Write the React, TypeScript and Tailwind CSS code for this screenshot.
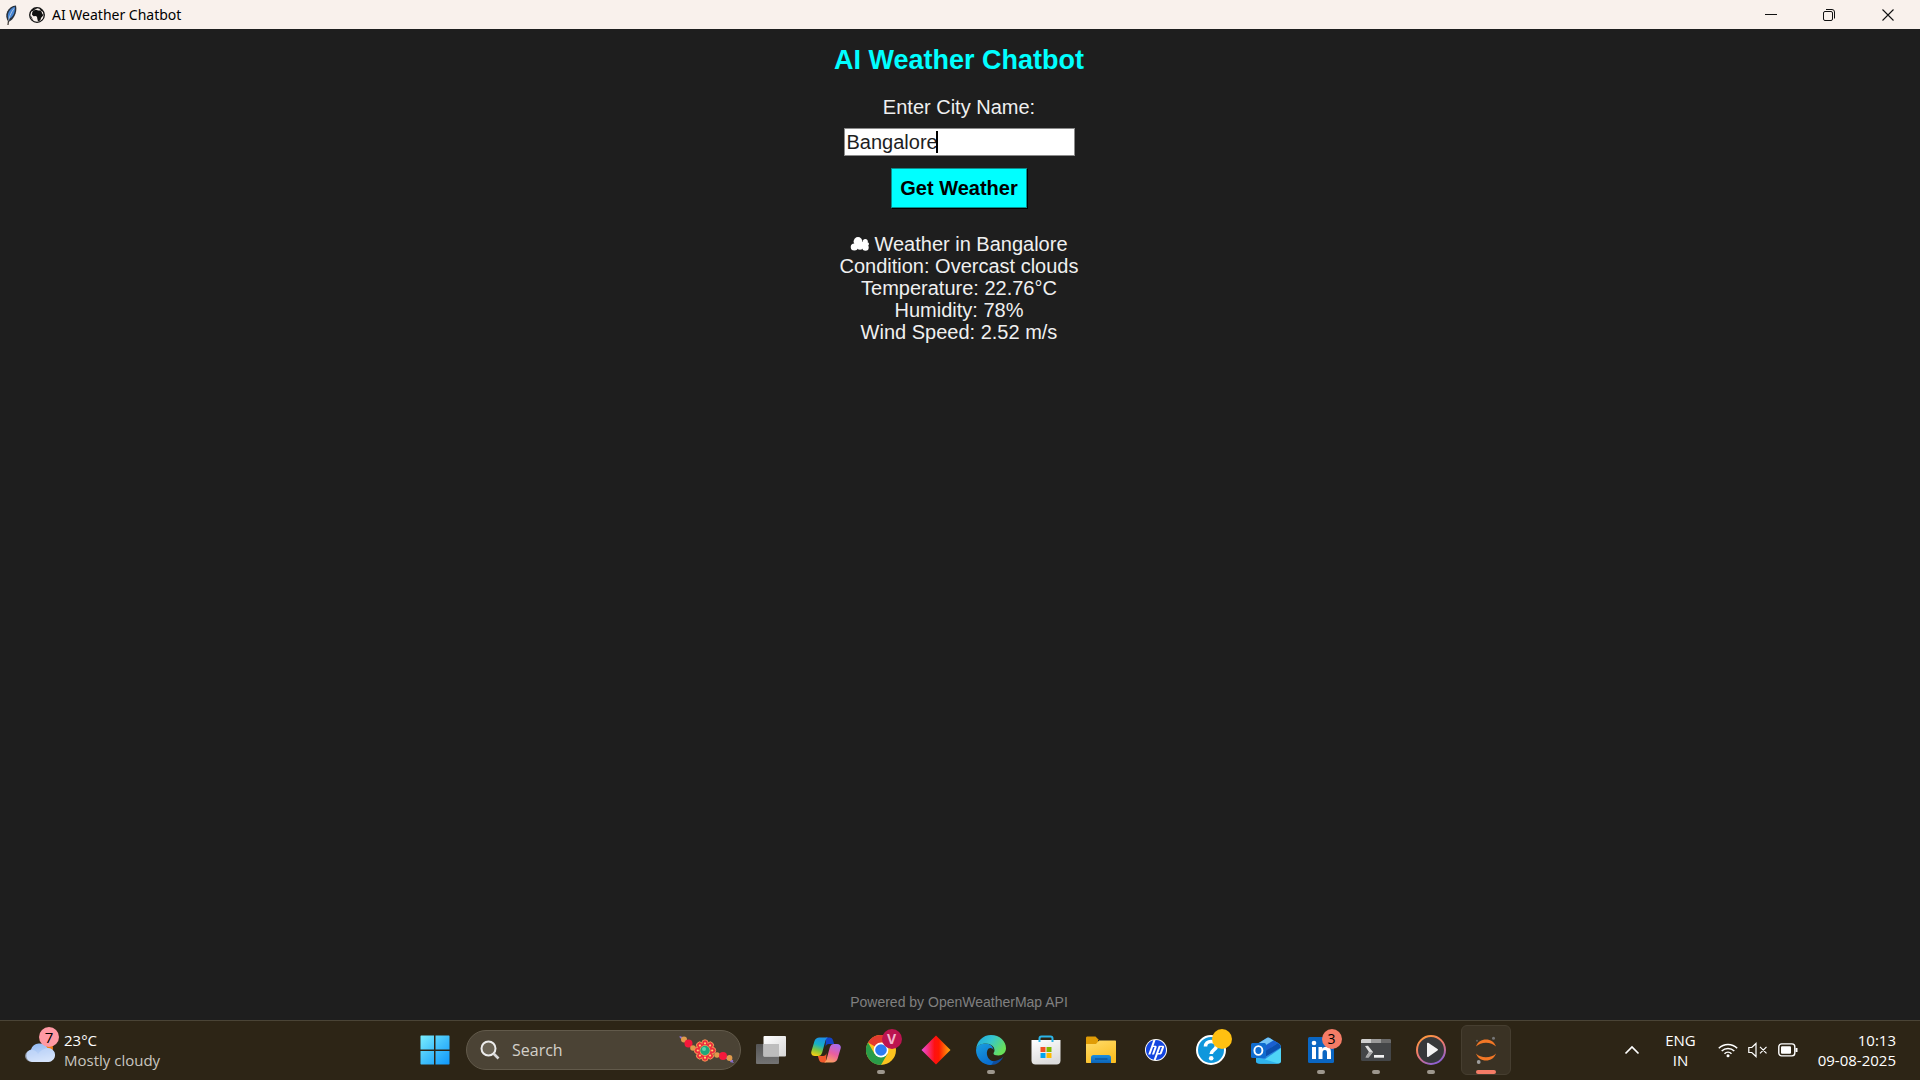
import { useState, type ReactNode } from "react";
import { SiHp } from "react-icons/si";

function FeatherIcon() {
  return (
    <svg width="14" height="20" viewBox="0 0 14 20" aria-hidden="true">
      <path d="M4.500 17C2 13.500 1.500 10 3.200 6.500 5 3 8 .8 12 .5c.8 3.500.3 7-1.500 10.500-1.300 2.500-3 4.500-6 6z" fill="#27303c" />
      <path d="M4.500 14C3 11 4 7.500 6 5c1.200-1.600 3-2.800 4.800-3.300.4 3.300-.2 6-1.500 8.300-1.100 2-2.600 3.200-4.800 4z" fill="#4585d4" />
      <path d="M4.200 18C4.800 13 6.500 8 10 3.500" stroke="#b9cbe2" strokeWidth="0.900" fill="none" />
      <path d="M4 20l.5-4.500" stroke="#3a332c" strokeWidth="1.200" />
    </svg>
  );
}

function GlobeIcon() {
  return (
    <svg width="16" height="16" viewBox="0 0 16 16" aria-hidden="true">
      <circle cx="8" cy="8" r="7.300" fill="#f9f1ec" stroke="#111" strokeWidth="1.300" />
      <path d="M4.500 3.500L7 2.800l2.200.6 2.500.2 1.300 2.200.4 1.400 1.400.2-1.500 2-1.300 1.500-.3 1.600-1.600 1.800-1.200-.3-.6-2.200-.3-2-1.400-.8-2 .2L3 7.800l.2-2.400z" fill="#111" />
      <path d="M1.500 4.500L4 1.800l3-.8 1 .6-2 .8-2.500 1.800zM10 1.500l2.500 1 1.800 2.300-1.800-.6z" fill="#111" />
      <path d="M1 8.500l1.500 1.300 1 2.200.5 2z" fill="#111" />
    </svg>
  );
}

function CloudGlyph() {
  return (
    <svg width="20" height="16" viewBox="0 0 20 16" aria-hidden="true" fill="#fff">
      <circle cx="4.300" cy="11" r="3.600" />
      <circle cx="8" cy="5.500" r="4.400" />
      <circle cx="10" cy="10.500" r="3.300" />
      <circle cx="15.300" cy="5.500" r="2.500" />
      <circle cx="17.300" cy="8" r="1.700" />
      <circle cx="15.500" cy="11.500" r="3.200" />
      <path d="M5 6h11v6H5z" />
    </svg>
  );
}

function WeatherIcon() {
  return (
    <svg width="30" height="22" viewBox="0 0 30 22" aria-hidden="true">
      <defs>
        <linearGradient id="wc" x1="0" y1="0" x2="0.300" y2="1">
          <stop offset="0" stopColor="#8db8f4" />
          <stop offset="0.600" stopColor="#b8d0f7" />
          <stop offset="1" stopColor="#e3edfd" />
        </linearGradient>
      </defs>
      <circle cx="22" cy="7" r="6" fill="#f27a1a" />
      <path d="M7 21a7 6.500 0 0 1-1-12.500A9 8.500 0 0 1 22.500 7 7 7 0 0 1 23.500 21z" fill="url(#wc)" />
      <path d="M7 21a7 6 0 0 1 0-12c3 0 5 2 6 4 2-3 5-5 9-6a7 7 0 0 1 1.500 14z" fill="#c9dcfa" opacity="0.600" />
    </svg>
  );
}

function StartIcon() {
  return (
    <svg width="30" height="30" viewBox="0 0 30 30" aria-hidden="true">
      <defs>
        <linearGradient id="win" gradientUnits="userSpaceOnUse" x1="0" y1="0" x2="30" y2="30">
          <stop offset="0" stopColor="#7cf0ff" />
          <stop offset="0.500" stopColor="#41c0fb" />
          <stop offset="1" stopColor="#0d96fb" />
        </linearGradient>
      </defs>
      <path d="M1 .5h13v14H.5V1zM15.500.5h13.500l.5.500v13.500h-14zM.5 16H14v13.500H1L.5 29zM15.500 16h14v13l-.5.500H15.500z" fill="url(#win)" />
    </svg>
  );
}

function SearchIcon() {
  return (
    <svg width="20" height="20" viewBox="0 0 20 20" fill="none" aria-hidden="true">
      <circle cx="8.500" cy="8.500" r="7" stroke="#ececec" strokeWidth="2" fill="#6a6355" />
      <path d="M13.500 13.500l5 5" stroke="#d8d8d8" strokeWidth="2.600" />
    </svg>
  );
}

function RakhiIcon() {
  const petals = [0, 45, 90, 135, 180, 225, 270, 315];
  return (
    <svg width="56" height="30" viewBox="0 0 56 30" aria-hidden="true">
      <path d="M1 2L15 14M38 19l16 7" stroke="#8a6fd0" strokeWidth="1.500" />
      <path d="M0 1l4 1-1 2zM55 28l-4-1 1-3z" fill="#8a6fd0" />
      <circle cx="5" cy="4.500" r="3" fill="#e09a4c" />
      <circle cx="9.500" cy="8.500" r="4" fill="#f5183c" />
      <circle cx="14" cy="13" r="2.800" fill="#e09a4c" />
      <circle cx="38" cy="20" r="2.800" fill="#e09a4c" />
      <circle cx="44" cy="21" r="4" fill="#f5183c" />
      <circle cx="50.500" cy="23" r="2.900" fill="#e09a4c" />
      {petals.map((a) => (
        <circle
          key={a}
          cx="26"
          cy="8"
          r="3.200"
          fill="#ee2b3e"
          stroke="#f3a057"
          strokeWidth="0.900"
          transform={`rotate(${a} 26 15.500)`}
        />
      ))}
      <circle cx="26" cy="15.500" r="7.500" fill="#ee2b3e" />
      {petals.map((a) => (
        <circle key={a} cx="26" cy="8.300" r="1.100" fill="#ffd36b" transform={`rotate(${a} 26 15.500)`} />
      ))}
      <circle cx="26" cy="15.500" r="5.400" fill="#f0a55c" />
      <circle cx="26" cy="15.500" r="4.700" fill="#1fa67a" />
      <circle cx="25" cy="14" r="2" fill="#5fd3ad" />
    </svg>
  );
}

function TaskViewIcon() {
  return (
    <svg width="30" height="28" viewBox="0 0 30 28" aria-hidden="true">
      <defs>
        <linearGradient id="tvb" x1="0" y1="0" x2="0" y2="1">
          <stop offset="0" stopColor="#555" />
          <stop offset="1" stopColor="#747474" />
        </linearGradient>
        <linearGradient id="tvf" x1="0" y1="0" x2="1" y2="1">
          <stop offset="0" stopColor="#fff" />
          <stop offset="1" stopColor="#d6d6d6" />
        </linearGradient>
      </defs>
      <rect x="0" y="8" width="23" height="20" rx="1" fill="url(#tvb)" />
      <rect x="7.500" y="0" width="22.500" height="20.500" rx="1" fill="url(#tvf)" />
      <rect x="7.500" y="8" width="15.500" height="12.500" fill="#bdbdbd" />
    </svg>
  );
}

function CopilotIcon() {
  return (
    <svg width="30" height="26" viewBox="0 0 30 26" aria-hidden="true">
      <defs>
        <linearGradient id="cpa" x1="0.600" y1="0" x2="0.300" y2="1">
          <stop offset="0" stopColor="#1c8fe8" />
          <stop offset="0.400" stopColor="#17b1c4" />
          <stop offset="0.700" stopColor="#7fc63f" />
          <stop offset="1" stopColor="#f7cf13" />
        </linearGradient>
        <linearGradient id="cpb" x1="0.700" y1="0" x2="0.300" y2="1">
          <stop offset="0" stopColor="#a86bf0" />
          <stop offset="0.500" stopColor="#ea5da0" />
          <stop offset="1" stopColor="#fda560" />
        </linearGradient>
      </defs>
      <path d="M15 .5h3.500c2 0 3 1 3.600 3l1 3.500H18c-2 0-3 1-3.500 3z" fill="#1343c8" />
      <path d="M15 25.500h-3.500c-2 0-3-1-3.600-3l-1-3.500H12c2 0 3-1 3.500-3z" fill="#f1592c" />
      <path d="M8.500.5H17c-1.500.5-2.200 2-2.800 4l-3 11c-.8 2.500-2 3.500-4.200 3.500H4c-3 0-4.500-2-3.500-5l3-10C4.300 1.800 6 .5 8.500.5z" fill="url(#cpa)" />
      <path d="M21.500 25.500H13c1.500-.5 2.200-2 2.800-4l3-11C19.600 8 20.800 7 23 7h3c3 0 4.500 2 3.500 5l-3 10c-.8 2.200-2.500 3.500-5 3.500z" fill="url(#cpb)" />
    </svg>
  );
}

function ChromeIcon() {
  return (
    <svg width="30" height="30" viewBox="0 0 30 30" aria-hidden="true">
      <circle cx="15" cy="15" r="15" fill="#fcc31e" />
      <path d="M15 15L2 7.500A15 15 0 0 1 28 7.500H15z" fill="#e33b2e" />
      <path d="M2 7.500A15 15 0 0 0 15 30l6.500-11.250L15 15 8.500 18.750z" fill="#2a9c48" />
      <circle cx="15" cy="15" r="7.400" fill="#fff" />
      <circle cx="15" cy="15" r="5.800" fill="#2c7bf2" />
    </svg>
  );
}

function DiamondIcon() {
  return (
    <svg width="30" height="30" viewBox="0 0 30 30" aria-hidden="true">
      <defs>
        <linearGradient id="dm">
          <stop offset="0" stopColor="#ea4fe6" />
          <stop offset="0.450" stopColor="#ff1010" />
          <stop offset="0.600" stopColor="#ff1800" />
          <stop offset="1" stopColor="#ffb010" />
        </linearGradient>
      </defs>
      <path d="M15 .5L29.500 15 15 29.500.5 15z" fill="url(#dm)" />
    </svg>
  );
}

function EdgeIcon() {
  return (
    <svg width="30" height="30" viewBox="0 0 24 24" aria-hidden="true">
      <defs>
        <linearGradient id="ega" x1="0" y1="0" x2="1" y2="0.500">
          <stop offset="0" stopColor="#1ba5e0" />
          <stop offset="0.500" stopColor="#35c5cf" />
          <stop offset="1" stopColor="#68e05a" />
        </linearGradient>
        <linearGradient id="egb" x1="0" y1="0" x2="0.500" y2="1">
          <stop offset="0" stopColor="#1a9fdf" />
          <stop offset="1" stopColor="#0a6fd0" />
        </linearGradient>
      </defs>
      <path d="M12 8c-3 0-5 3-4.500 6.500C8 19 12 21.500 16 20.500c2.500-.6 4.500-1.500 6-3.500C20 21.500 16.500 24 12 24 7 24 5 17 6 13z" fill="#0f4fa0" />
      <path d="M.1 11.500C.5 8.500 4 6.800 7.500 6.800c4 0 6.500 2.700 6.500 5.200-1-2-4-2.200-5 .5-1.300 3.800 1.500 8 5 8.700-1 2-2 2.800-2 2.800C5 24 0 18.500 0 12z" fill="url(#egb)" />
      <path d="M.1 11.500C.5 5 5.500 0 12 0c7 0 12 5 12 10.500 0 3.500-2.800 5.800-6 5.800-2.800 0-4-.8-4-1.600 0-.6.800-.9.800-2.500 0-3-3-5.400-7-5.400-3.800 0-7 1.700-7.700 4.700z" fill="url(#ega)" />
    </svg>
  );
}

function StoreIcon() {
  return (
    <svg width="30" height="30" viewBox="0 0 30 30" aria-hidden="true">
      <defs>
        <linearGradient id="st" x1="0" y1="0" x2="0.400" y2="1">
          <stop offset="0" stopColor="#fff" />
          <stop offset="1" stopColor="#dcdcdc" />
        </linearGradient>
      </defs>
      <path d="M8.500 7V3.500c0-1.400.8-2 2-2h9c1.200 0 2 .6 2 2V7" stroke="#2bb5e8" strokeWidth="2" fill="none" />
      <path d="M.5 5h29v20.500c0 2.500-1.500 4-4 4h-21c-2.500 0-4-1.500-4-4z" fill="url(#st)" />
      <path d="M8.500 5v2M21.500 5v2" stroke="#2bb5e8" strokeWidth="2" />
      <path d="M9.500 12h5v5h-5z" fill="#f05022" />
      <path d="M15.500 12h5v5h-5z" fill="#7fba00" />
      <path d="M9.500 18h5v5h-5z" fill="#00a4ef" />
      <path d="M15.500 18h5v5h-5z" fill="#ffb900" />
    </svg>
  );
}

function FolderIcon() {
  return (
    <svg width="30" height="28" viewBox="0 0 30 28" aria-hidden="true">
      <defs>
        <linearGradient id="fo" x1="0" y1="0" x2="0.500" y2="1">
          <stop offset="0" stopColor="#ffdc6b" />
          <stop offset="1" stopColor="#fbbf24" />
        </linearGradient>
        <linearGradient id="fb" x1="0" y1="0" x2="0" y2="1">
          <stop offset="0" stopColor="#1b8ee0" />
          <stop offset="1" stopColor="#0c64b8" />
        </linearGradient>
      </defs>
      <path d="M0 2c0-1 .6-1.500 1.500-1.500h8L13 4h-1v8H0z" fill="#e09c06" />
      <path d="M0 8h10l3-3.500h16c.6 0 1 .4 1 1V26c0 .6-.5 1-1 1H1c-.6 0-1-.4-1-1z" fill="url(#fo)" />
      <path d="M5 27v-5.500c0-1.500 1-2.500 2.500-2.500h15c1.500 0 2.500 1 2.500 2.500V27z" fill="url(#fb)" />
      <path d="M9 23h12.500" stroke="#0a4f96" strokeWidth="1.200" />
    </svg>
  );
}

function HpIcon() {
  return (
    <span className="grid size-[22px] place-items-center rounded-full bg-white">
      <SiHp size={20} color="#1446e0" aria-hidden="true" />
    </span>
  );
}

function HelpIcon() {
  return (
    <svg width="30" height="30" viewBox="0 0 30 30" aria-hidden="true">
      <circle cx="15" cy="15" r="14" fill="#0f97dc" stroke="#fff" strokeWidth="2" />
      <path d="M9.500 11.500c0-3 2.300-5 5.500-5s5.500 1.800 5.500 4.500c0 3.800-5.300 4-5.300 8" stroke="#fff" strokeWidth="3.600" fill="none" />
      <circle cx="15.200" cy="23.300" r="2.300" fill="#fff" />
    </svg>
  );
}

function OutlookIcon() {
  return (
    <svg width="30" height="27" viewBox="0 0 30 27" aria-hidden="true">
      <path d="M5 7.500L16 .8c.8-.5 1.600-.5 2.400 0L28 6.500c1.200.8 2 2 2 3.500v14c0 1.500-1 2.500-2.500 2.500H7.500C6 26.500 5 25.500 5 24z" fill="#2a8be0" />
      <path d="M5 8L16 1c.8-.5 1.600-.5 2.400 0l4 2.400L8 12z" fill="#74c4f6" />
      <path d="M11 11l11.500-7.600L27 6 12 16z" fill="#1a5fd0" />
      <path d="M13 15L27 6l2 2 .8 2.500L14 20z" fill="#0b4fae" />
      <path d="M30 11v13c0 1.500-1 2.500-2.500 2.500H8z" fill="#4fd4f7" />
      <path d="M5 20l22.500 6.500h-20C6 26.500 5 25.500 5 24z" fill="#2fb4ee" />
      <rect x="0" y="6" width="15" height="15" rx="1.500" fill="#0f6cd0" />
      <ellipse cx="7.400" cy="13.500" rx="4" ry="4.400" fill="none" stroke="#fff" strokeWidth="1.900" />
    </svg>
  );
}

function LinkedInIcon() {
  return (
    <svg width="26" height="26" viewBox="0 0 26 26" aria-hidden="true">
      <rect width="26" height="26" rx="1.500" fill="#0a66c2" />
      <circle cx="6" cy="6" r="2.300" fill="#fff" />
      <path d="M4 10h4v12H4zM10.500 10h3.800v1.700c.7-1.200 2-2 3.900-2 3.600 0 4.800 2.200 4.800 5.600V22h-4v-6c0-1.700-.5-2.900-2.100-2.900-1.700 0-2.400 1.200-2.400 2.900v6h-4z" fill="#fff" />
    </svg>
  );
}

function TerminalIcon() {
  return (
    <svg width="30" height="22" viewBox="0 0 30 22" aria-hidden="true">
      <rect width="30" height="22" rx="1.500" fill="#444648" />
      <path d="M1 0h9v4H0V1z" fill="#cfcfcf" />
      <path d="M10 0h10v4H10z" fill="#9b9b9b" />
      <path d="M20 0h9l1 1v3H20z" fill="#6a6a6a" />
      <path d="M4 7l3-.2 5 6.200-4.500 5.500-3-.2L8 13z" fill="#dedede" />
      <path d="M4.500 18.500L8 13h4l-4.500 5.500z" fill="#a8a8a8" />
      <path d="M13 16h10v2.700H13z" fill="#f2f2f2" />
    </svg>
  );
}

function MediaIcon() {
  return (
    <svg width="30" height="30" viewBox="0 0 30 30" aria-hidden="true">
      <defs>
        <linearGradient id="md" x1="0.200" y1="0" x2="0.700" y2="1">
          <stop offset="0" stopColor="#ff9a3c" />
          <stop offset="0.450" stopColor="#f07a6a" />
          <stop offset="1" stopColor="#8a5fd8" />
        </linearGradient>
      </defs>
      <circle cx="15" cy="15" r="14" fill="#36383a" stroke="url(#md)" strokeWidth="2" />
      <path d="M11 8.500c0-.7.600-1 1.200-.7L21.500 14c.6.400.6 1 0 1.400L12.200 22c-.6.300-1.200 0-1.200-.7z" fill="#f3f3f3" />
    </svg>
  );
}

function JupyterIcon() {
  return (
    <svg width="22" height="28" viewBox="0 0 22 28" aria-hidden="true">
      <path d="M1 10.500C2.500 6 6.500 3.500 11 3.500s8.500 2.500 10 7c-2.500-2.500-6-3.800-10-3.800S3.500 8 1 10.500z" fill="#f37726" />
      <path d="M1 17.500c1.500 4.500 5.500 7 10 7s8.500-2.500 10-7c-2.500 2.500-6 3.800-10 3.800S3.500 20 1 17.500z" fill="#f37726" />
      <circle cx="18.500" cy="2.300" r="1.500" fill="#767677" />
      <circle cx="3.700" cy="26" r="1.900" fill="#9e9e9e" />
      <circle cx="2" cy="4.800" r="1" fill="#616262" />
    </svg>
  );
}

function Badge({ className, children }: { className: string; children?: ReactNode }) {
  return (
    <span className={`absolute grid size-5 place-items-center rounded-full text-sm leading-none ${className}`}>
      {children}
    </span>
  );
}

type Task = { name: string; icon: ReactNode; badge?: ReactNode; running?: boolean; active?: boolean };

const tasks: Task[] = [
  { name: "Task view", icon: <TaskViewIcon /> },
  { name: "Copilot", icon: <CopilotIcon /> },
  {
    name: "Chrome",
    icon: <ChromeIcon />,
    badge: <Badge className="-top-[6px] -right-[6px] bg-[#bb1450] font-bold text-[#f3b5cc]">V</Badge>,
    running: true,
  },
  { name: "Launcher", icon: <DiamondIcon /> },
  { name: "Edge", icon: <EdgeIcon />, running: true },
  { name: "Store", icon: <StoreIcon /> },
  { name: "File Explorer", icon: <FolderIcon /> },
  { name: "HP", icon: <HpIcon /> },
  { name: "Get help", icon: <HelpIcon />, badge: <Badge className="-top-[6px] -right-[6px] bg-[#ffc011]" /> },
  { name: "Outlook", icon: <OutlookIcon /> },
  {
    name: "LinkedIn",
    icon: <LinkedInIcon />,
    badge: <Badge className="-top-[8px] -right-[8px] bg-[#f57c66] text-black">3</Badge>,
    running: true,
  },
  { name: "Terminal", icon: <TerminalIcon />, running: true },
  { name: "Media Player", icon: <MediaIcon />, running: true },
  { name: "Jupyter", icon: <JupyterIcon />, active: true },
];

function TaskButton({ task }: { task: Task }) {
  return (
    <div className="flex w-[55px] justify-center">
      <button
        type="button"
        aria-label={task.name}
        className={`relative grid size-[50px] place-items-center rounded-md border ${
          task.active ? "border-[#463e30] bg-[#3a3224]" : "border-transparent"
        }`}
      >
        <span className="relative block">
          {task.icon}
          {task.badge}
        </span>
        {task.running && <span className="absolute bottom-0 left-5 h-1 w-2 rounded-full bg-[#9d978d]" />}
        {task.active && <span className="absolute bottom-0 left-3.5 h-1 w-5 rounded-full bg-[#f57c66]" />}
      </button>
    </div>
  );
}

function TitleBar() {
  return (
    <header className="flex h-[29px] shrink-0 items-center bg-[#f9f1ec] pl-1 text-black">
      <FeatherIcon />
      <h1 className="ml-[11px] flex items-center gap-[7px] text-sm">
        <GlobeIcon />
        AI Weather Chatbot
      </h1>
      <div className="ml-auto flex h-full">
        <button type="button" aria-label="Minimize" className="grid w-[58px] place-items-center">
          <svg width="12" height="12" viewBox="0 0 12 12" aria-hidden="true">
            <path d="M0 5.500h12" stroke="#111" />
          </svg>
        </button>
        <button type="button" aria-label="Restore" className="grid w-[58px] place-items-center">
          <svg width="12" height="12" viewBox="0 0 12 12" fill="none" stroke="#111" aria-hidden="true">
            <rect x="0.500" y="2.500" width="9" height="9" rx="1.500" />
            <path d="M3 .5h6A2.500 2.500 0 0 1 11.500 3v6.500" />
          </svg>
        </button>
        <button type="button" aria-label="Close" className="mr-[2px] grid w-[60px] place-items-center">
          <svg width="12" height="12" viewBox="0 0 12 12" stroke="#111" strokeWidth="1.100" aria-hidden="true">
            <path d="M.5.5l11 11M11.500.5l-11 11" />
          </svg>
        </button>
      </div>
    </header>
  );
}

function Chatbot() {
  const [city, setCity] = useState("Bangalore");
  return (
    <main className="flex grow flex-col items-center bg-[#1e1e1e] pr-[2px] font-['Liberation_Sans',Arial,sans-serif] text-xl leading-[23px] text-[#f0f0f0]">
      <h2 className="mt-[15px] text-[27px] leading-8 font-bold text-[#00ffff]">AI Weather Chatbot</h2>
      <label htmlFor="city" className="mt-5">
        Enter City Name:
      </label>
      <div className="relative mt-[9px] w-[231px]">
        <input
          id="city"
          value={city}
          onChange={(e) => setCity(e.target.value)}
          className="block h-7 w-full border border-[#8a8a8a] bg-white px-[2px] text-[#1e1e1e] outline-none"
        />
        <span className="absolute top-[3px] left-[92px] h-[22px] w-[2px] bg-black" />
      </div>
      <button
        type="button"
        className="mt-3 h-10 border border-[#0b8f8f] bg-[#00ffff] px-2 font-bold text-black shadow-[1px_1px_0_#000]"
      >
        Get Weather
      </button>
      <section className="mt-[25px] text-center leading-[22px]">
        <p className="flex items-center justify-center gap-1">
          <CloudGlyph />
          Weather in Bangalore
        </p>
        <p>Condition: Overcast clouds</p>
        <p>Temperature: 22.76°C</p>
        <p>Humidity: 78%</p>
        <p>Wind Speed: 2.52 m/s</p>
      </section>
      <footer className="mt-auto mb-[10px] text-sm leading-4 text-[#808080]">Powered by OpenWeatherMap API</footer>
    </main>
  );
}

function Tray() {
  return (
    <div className="flex items-center justify-end pr-6 text-[15px] leading-5 text-white">
      <button type="button" aria-label="Show hidden icons" className="mr-[25px]">
        <svg width="16" height="10" viewBox="0 0 16 10" fill="none" stroke="#fff" strokeWidth="1.700" aria-hidden="true">
          <path d="M1.500 8.500L8 2l6.500 6.500" />
        </svg>
      </button>
      <div className="mr-[22px] text-center">
        <p>ENG</p>
        <p>IN</p>
      </div>
      <div className="mr-5 flex items-center gap-[10px]">
        <svg width="20" height="16" viewBox="0 0 20 16" fill="none" stroke="#fff" strokeWidth="1.500" aria-hidden="true">
          <path d="M.8 6.300a13 13 0 0 1 18.400 0M3.700 9a9 9 0 0 1 12.600 0M6.500 11.700a5 5 0 0 1 7 0" />
          <circle cx="10" cy="13.700" r="1.500" fill="#fff" stroke="none" />
        </svg>
        <svg width="20" height="16" viewBox="0 0 20 16" fill="none" stroke="#fff" strokeWidth="1.200" aria-hidden="true">
          <path d="M.8 5.500h3L8 1.500v13l-4.200-4h-3zM12 4.800l6.500 6.500M18.500 4.800L12 11.300" />
        </svg>
        <svg width="20" height="14" viewBox="0 0 20 14" fill="none" stroke="#fff" strokeWidth="1.400" aria-hidden="true">
          <rect x="0.800" y="0.900" width="16" height="12" rx="2.800" />
          <rect x="3" y="3.200" width="10" height="7.500" rx="1" fill="#fff" stroke="none" />
          <path d="M18.500 5v4" strokeWidth="2" />
        </svg>
      </div>
      <div className="text-right">
        <p>10:13</p>
        <p>09-08-2025</p>
      </div>
    </div>
  );
}

function Taskbar() {
  return (
    <nav className="grid h-[60px] shrink-0 grid-cols-[1fr_auto_1fr] border-t border-[#4a4436] bg-[#2d2516] pb-px font-['Open_Sans','Noto_Sans',sans-serif]">
      <div className="flex items-center pl-[25px] text-[15px] leading-5">
        <div className="relative mt-1 mr-[9px]">
          <WeatherIcon />
          <span className="absolute -top-[14px] left-[14px] grid size-5 place-items-center rounded-full bg-[#ff99a4] leading-none text-black">
            7
          </span>
        </div>
        <div>
          <p className="text-white">23°C</p>
          <p className="text-[#c9c6c0]">Mostly cloudy</p>
        </div>
      </div>
      <div className="flex items-center">
        <button type="button" aria-label="Start" className="grid w-[55px] place-items-center">
          <StartIcon />
        </button>
        <label className="mr-[2px] ml-1 flex h-10 w-[275px] items-center rounded-full border border-[#625a4b] bg-[#4b4335] pr-[5px] pl-[13px]">
          <SearchIcon />
          <input
            type="text"
            aria-label="Search"
            placeholder="Search"
            className="ml-3 w-0 grow bg-transparent text-base text-white placeholder-[#d3d0ca] outline-none"
          />
          <RakhiIcon />
        </label>
        {tasks.map((task) => (
          <TaskButton key={task.name} task={task} />
        ))}
      </div>
      <Tray />
    </nav>
  );
}

export default function App() {
  return (
    <div className="flex min-h-screen flex-col font-['Noto_Sans','Open_Sans',sans-serif]">
      <TitleBar />
      <Chatbot />
      <Taskbar />
    </div>
  );
}
